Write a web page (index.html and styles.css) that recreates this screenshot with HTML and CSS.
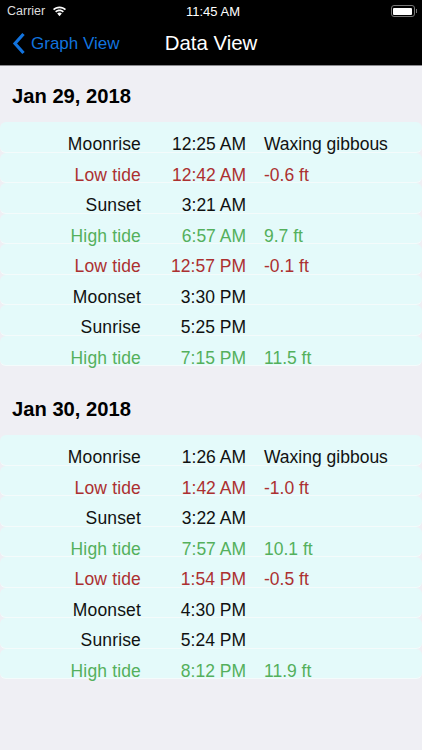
FILE: index.html
```html
<!DOCTYPE html>
<html>
<head>
<link rel="stylesheet" href="styles.css">
</head>
<body>
<div class="statusbar">
    <div class="status-left">
        <span>Carrier</span>
        <svg class="wifi" width="15" height="11" viewBox="0 0 15 11">
            <path d="M7.5 2.2c2.1 0 4 .8 5.4 2.1l1.1-1.2C12.3 1.5 10 .5 7.5.5S2.7 1.5 1 3.1l1.1 1.2c1.4-1.3 3.3-2.1 5.4-2.1z" fill="#fff"/>
            <path d="M7.5 5.2c1.3 0 2.4.5 3.3 1.2l1.1-1.2C10.700 4.100 9.200 3.500 7.500 3.500s-3.200.6-4.400 1.700l1.100 1.200c.9-.7 2-1.200 3.300-1.200z" fill="#fff"/>
            <path d="M7.500 6.600c-.9 0-1.700.3-2.300.9l2.300 2.800 2.300-2.800c-.6-.6-1.400-.9-2.300-.9z" fill="#fff"/>
        </svg>
    </div>
    <div class="status-time">11:45 AM</div>
    <div class="status-right">
        <div class="battery"><div class="battery-fill"></div></div>
        <div class="battery-tip"></div>
    </div>
</div>
<div class="navbar">
    <div class="back">
        <svg width="14" height="23" viewBox="0 0 14 23">
            <path d="M11.500 2 L3 11.500 L11.500 21" fill="none" stroke="#1273de" stroke-width="3.200"/>
        </svg>
        <span>Graph View</span>
    </div>
    <div class="title">Data View</div>
</div>

<div class="content">
    <h2 class="day">Jan 29, 2018</h2>
    <div class="table">
        <div class="row"><span class="name">Moonrise</span><span class="time">12:25 AM</span><span class="info">Waxing gibbous</span></div>
        <div class="row low"><span class="name">Low tide</span><span class="time">12:42 AM</span><span class="info">-0.6 ft</span></div>
        <div class="row"><span class="name">Sunset</span><span class="time">3:21 AM</span><span class="info"></span></div>
        <div class="row high"><span class="name">High tide</span><span class="time">6:57 AM</span><span class="info">9.7 ft</span></div>
        <div class="row low"><span class="name">Low tide</span><span class="time">12:57 PM</span><span class="info">-0.1 ft</span></div>
        <div class="row"><span class="name">Moonset</span><span class="time">3:30 PM</span><span class="info"></span></div>
        <div class="row"><span class="name">Sunrise</span><span class="time">5:25 PM</span><span class="info"></span></div>
        <div class="row high"><span class="name">High tide</span><span class="time">7:15 PM</span><span class="info">11.5 ft</span></div>
    </div>

    <h2 class="day">Jan 30, 2018</h2>
    <div class="table">
        <div class="row"><span class="name">Moonrise</span><span class="time">1:26 AM</span><span class="info">Waxing gibbous</span></div>
        <div class="row low"><span class="name">Low tide</span><span class="time">1:42 AM</span><span class="info">-1.0 ft</span></div>
        <div class="row"><span class="name">Sunset</span><span class="time">3:22 AM</span><span class="info"></span></div>
        <div class="row high"><span class="name">High tide</span><span class="time">7:57 AM</span><span class="info">10.1 ft</span></div>
        <div class="row low"><span class="name">Low tide</span><span class="time">1:54 PM</span><span class="info">-0.5 ft</span></div>
        <div class="row"><span class="name">Moonset</span><span class="time">4:30 PM</span><span class="info"></span></div>
        <div class="row"><span class="name">Sunrise</span><span class="time">5:24 PM</span><span class="info"></span></div>
        <div class="row high"><span class="name">High tide</span><span class="time">8:12 PM</span><span class="info">11.9 ft</span></div>
    </div>
</div>
</body>

</html>
```
FILE: styles.css
```css
html, body {
    margin: 0;
    padding: 0;
}
body {
    width: 422px;
    height: 750px;
    overflow: hidden;
    background-color: rgb(239, 239, 244);
    font-family: "Liberation Sans", Arial, sans-serif;
    color: #111;
}

/* status bar */
.statusbar {
    display: grid;
    grid-template-columns: 1fr auto 1fr;
    align-items: center;
    height: 22px;
    background-color: #000;
    color: #fff;
    font-size: 12.500px;
}
.status-left {
    display: flex;
    align-items: center;
    gap: 7px;
    padding-left: 7px;
    color: #ddd;
}
.status-time {
    font-size: 13px;
    padding-left: 4px;
}
.status-right {
    display: flex;
    align-items: center;
    justify-content: flex-end;
    padding-right: 5px;
}
.battery {
    box-sizing: border-box;
    width: 24px;
    height: 12px;
    padding: 1.500px;
    border: 1px solid #777;
    border-radius: 3px;
}
.battery-fill {
    height: 100%;
    background-color: #fff;
    border-radius: 1px;
}
.battery-tip {
    width: 1.500px;
    height: 4px;
    margin-left: 1px;
    background-color: #777;
}

/* nav bar */
.navbar {
    position: relative;
    display: flex;
    align-items: center;
    justify-content: center;
    height: 43px;
    background-color: #000;
    border-bottom: 1px solid #8a8a8e;
}
.title {
    color: #fff;
    font-size: 20.400px;
}
.back {
    position: absolute;
    left: 12px;
    top: 10px;
    display: flex;
    align-items: center;
    gap: 5px;
    color: #1273de;
    font-size: 17px;
}

/* data */
.day {
    margin: 0;
    padding: 19px 0 0 12px;
    height: 37px;
    color: #000;
    font-size: 20.200px;
    line-height: 23px;
    font-weight: bold;
}
.table {
    margin-bottom: 13px;
}
.row {
    box-sizing: border-box;
    display: grid;
    grid-template-columns: 141px 105px 1fr;
    height: 30.500px;
    padding-top: 12px;
    background-color: rgb(228, 250, 250);
    border-bottom: 1px solid #f4fbfb;
    border-radius: 6px;
    font-size: 17.500px;
    line-height: 21px;
    white-space: nowrap;
}
.name, .time {
    text-align: right;
}
.name {
    letter-spacing: 0.150px;
}
.info {
    padding-left: 18px;
}
.low {
    color: rgb(172, 48, 48);
}
.high {
    color: rgb(84, 176, 92);
}
```
